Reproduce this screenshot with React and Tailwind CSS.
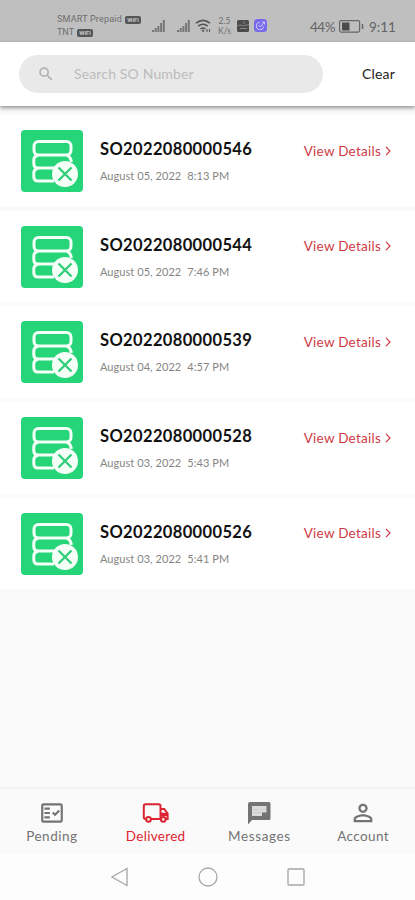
import { MdSearch, MdOutlineFactCheck, MdPersonOutline } from 'react-icons/md'

const ORDERS = [
  { number: 'SO2022080000546', date: 'August 05, 2022', time: '8:13 PM' },
  { number: 'SO2022080000544', date: 'August 05, 2022', time: '7:46 PM' },
  { number: 'SO2022080000539', date: 'August 04, 2022', time: '4:57 PM' },
  { number: 'SO2022080000528', date: 'August 03, 2022', time: '5:43 PM' },
  { number: 'SO2022080000526', date: 'August 03, 2022', time: '5:41 PM' },
]

const TABS = [
  { key: 'pending', label: 'Pending', icon: PendingIcon, spacing: 'tracking-[0.5px]' },
  { key: 'delivered', label: 'Delivered', icon: TruckIcon, spacing: 'tracking-[0.3px]' },
  { key: 'messages', label: 'Messages', icon: MessageIcon, spacing: 'tracking-[0.6px]' },
  { key: 'account', label: 'Account', icon: AccountIcon, spacing: 'tracking-[0.4px]' },
]

function PendingIcon() {
  return <MdOutlineFactCheck size={26} />
}

function AccountIcon() {
  return <MdPersonOutline size={28} />
}

function TruckIcon() {
  return (
    <svg width="28" height="20" viewBox="0 0 28 20" fill="none" stroke="currentColor" strokeWidth="2">
      <path d="M4.5 16H3.6Q1.8 16 1.8 14V3Q1.8 1.2 3.6 1.2H16.7Q18.5 1.2 18.5 3V16M8.5 16H18.5" />
      <path d="M18.5 6H22.2L25.6 10.5V16H24" />
      <path d="M19 9.8H24.8L26 11V13H19Z" fill="currentColor" stroke="none" />
      <circle cx="6.5" cy="16.4" r="2.3" />
      <circle cx="21.3" cy="16.4" r="2.3" />
    </svg>
  )
}

function MessageIcon() {
  return (
    <svg width="24" height="24" viewBox="0 0 24 24">
      <path d="M1 3Q1 1 3 1H22Q23.5 1 23.5 3V17.5Q23.5 19 22 19H5L1 23.5Z" fill="currentColor" />
      <path d="M5 5H19.5V11.5H15V15H5Z" fill="#dadada" />
      <path d="M6 8.5H18.5M6 11.5H14" stroke="#cdcdcd" />
    </svg>
  )
}

function OrderIcon() {
  return (
    <svg className="shrink-0" width="62" height="62" viewBox="0 0 62 62" fill="none">
      <rect width="62" height="62" rx="4" fill="#27d579" />
      <g stroke="#f4fff8" strokeWidth="3">
        <rect x="13" y="11.5" width="37" height="13.5" rx="4.5" />
        <path d="M17 25Q12.8 26.5 12.8 30V33.5Q12.8 38 17 38H34M46 25Q50.2 27.5 50.2 32" />
        <path d="M17 38Q12.8 39.5 12.8 43V46.5Q12.8 51 17 51H33" />
      </g>
      <circle cx="44" cy="44" r="13" fill="#f7fff9" />
      <path d="M37.5 37.5L50.5 50.5M50.5 37.5L37.5 50.5" stroke="#32ce7b" strokeWidth="2.4" />
    </svg>
  )
}

function Signal() {
  return (
    <svg width="13" height="12" viewBox="0 0 13 12" fill="#777">
      <path d="M0 10H2V12H0ZM2.7 8H4.7V12H2.7ZM5.4 6H7.4V12H5.4ZM8.1 3H10.1V12H8.1ZM10.8 0H12.8V12H10.8Z" />
    </svg>
  )
}

function Wifi() {
  return (
    <svg className="mt-[6px]" width="16" height="14" viewBox="0 0 16 14" fill="none" stroke="#555" strokeWidth="1.6">
      <path d="M1 4.2Q8 -1.4 15 4.2M3.2 7.2Q8 3.3 12.8 7.2M5.5 10Q8 8 10.5 10" />
      <path d="M7 11.3H9L8 12.8ZM12 10V13M14.5 10V13" strokeWidth="1" />
    </svg>
  )
}

function VoWifi() {
  return (
    <span className="flex h-[8px] w-4 items-center justify-center rounded-[2px] bg-[#555] text-[6px] leading-none font-bold text-[#c4c4c4]">
      WiFi
    </span>
  )
}

function StatusBar() {
  return (
    <div className="flex h-[42px] shrink-0 items-start bg-[#bfbfbf] pt-[13px] pl-[57px] text-[#6e6e6e]">
      <div className="w-[95px] font-[Roboto] text-[9px] leading-[13px]">
        <div className="flex items-center gap-[3px] whitespace-nowrap">
          <span className="tracking-[0.2px]">SMART Prepaid</span>
          <VoWifi />
        </div>
        <div className="flex items-center gap-[3px]">
          <span>TNT</span>
          <VoWifi />
        </div>
      </div>
      <div className="mt-[7px] flex w-[43px] gap-3">
        <Signal />
        <Signal />
      </div>
      <Wifi />
      <div className="ml-[4px] w-[19px] pt-[3px] text-center text-[8.5px] leading-[10px]">
        <div>2.5</div>
        <div>K/s</div>
      </div>
      <svg className="mt-[7px] ml-[3px]" width="12" height="12" viewBox="0 0 12 12">
        <rect width="12" height="12" rx="1.5" fill="#4c4c4c" />
        <path d="M0 5.5L4 5L5 6L12 4.5M3 8.5H10M7 1V4" stroke="#858585" fill="none" />
      </svg>
      <svg className="mt-[6px] ml-[5px]" width="13" height="13" viewBox="0 0 13 13" fill="none">
        <rect width="13" height="13" rx="3.5" fill="#7669ec" />
        <path d="M5.8 3.2A3.8 3.8 0 1 0 9.8 7.4M4.5 6L6.5 8L10 3.2M8 3H10.5V5.5" stroke="#d1cbf4" />
      </svg>
      <span className="ml-[43px] w-[29px] pt-[6px] font-[Lato] text-[13.5px] leading-4 tracking-[-0.5px] text-[#646464]">44%</span>
      <svg className="mt-[7px]" width="25" height="13" viewBox="0 0 25 13" fill="none">
        <rect x=".6" y=".6" width="20" height="11.5" rx="1.5" stroke="#666" strokeWidth="1.2" />
        <rect x="3" y="2.5" width="7.5" height="8" fill="#4c4c4c" />
        <path d="M23.5 4V9" stroke="#666" strokeWidth="1.5" />
      </svg>
      <span className="ml-[5px] pt-[6px] font-[Lato] text-[13.5px] leading-4 text-[#646464]">9:11</span>
    </div>
  )
}

function OrderRow({ order }) {
  return (
    <li className="flex h-[91.7px] items-start bg-white pt-[15px] pr-[24px] pl-[21px]">
      <OrderIcon />
      <div className="ml-[17px] pt-[9px]">
        <div className="text-[16.5px] leading-5 font-bold tracking-[0.36px] whitespace-nowrap text-[#111]">{order.number}</div>
        <div className="mt-[9px] text-[11px] leading-4 tracking-[0.06px] whitespace-nowrap text-[#858585]">
          {order.date}
          <span className="ml-[6px]">{order.time}</span>
        </div>
      </div>
      <button className="ml-auto flex items-center gap-[4px] pt-[10.5px] text-[13.5px] leading-5 tracking-[0.25px] whitespace-nowrap text-[#cf3a45]">
        View Details
        <svg width="6" height="10" viewBox="0 0 6 10" fill="none" stroke="currentColor" strokeWidth="1.2">
          <path d="M1 .8L5 5L1 9.2" />
        </svg>
      </button>
    </li>
  )
}

export default function App() {
  const active = 'delivered'

  return (
    <div className="flex h-[900px] w-full flex-col overflow-hidden bg-[#fafafa] font-[Lato,sans-serif]">
      <StatusBar />

      {/* Search */}
      <header className="z-10 flex h-16 shrink-0 items-center bg-white pr-5 pl-[19px] shadow-[0_2px_4px_rgba(0,0,0,0.42)]">
        <div className="flex h-[38px] w-[304px] items-center rounded-full bg-[#e9e9e9] pl-[18px]">
          <MdSearch size={18} className="text-[#adadad]" />
          <span className="ml-[19px] pb-[2px] text-[14px] tracking-[0.15px] text-[#bcbcbc]">Search SO Number</span>
        </div>
        <span className="ml-auto pb-px text-[14px] tracking-[0.2px] text-[#222]">Clear</span>
      </header>

      {/* Delivered orders */}
      <main className="flex-1 bg-[#fafafa] pt-[9px]">
        <ul className="flex flex-col gap-1">
          {ORDERS.map(order => <OrderRow key={order.number} order={order} />)}
        </ul>
      </main>

      <nav className="grid h-[67px] shrink-0 grid-cols-4 border-t-2 border-[#f3f3f3] bg-[#fafafa]">
        {TABS.map(({ key, label, icon: Icon, spacing }) => (
          <button
            key={key}
            className={`flex flex-col items-center pt-[11px] ${key === active ? 'text-[#dc2430]' : 'text-[#737373]'}`}
          >
            <span className="flex h-[26px] items-center"><Icon /></span>
            <span className={`text-[13.5px] leading-5 ${spacing}`}>{label}</span>
          </button>
        ))}
      </nav>

      {/* Android buttons */}
      <div className="flex h-[46px] shrink-0 items-center justify-center gap-[69px] bg-[#fdfdfd] text-[#a5a5a5]">
        <svg width="18" height="20" viewBox="0 0 18 20" fill="none" stroke="currentColor" strokeWidth="1.3">
          <path d="M16 1.5V18.5L.8 10Z" />
        </svg>
        <svg width="20" height="20" viewBox="0 0 20 20" fill="none" stroke="currentColor" strokeWidth="1.3">
          <circle cx="10" cy="10" r="9" />
        </svg>
        <svg width="18" height="18" viewBox="0 0 18 18" fill="none" stroke="currentColor" strokeWidth="1.3">
          <rect x="1" y="1" width="16" height="16" rx="1" />
        </svg>
      </div>
    </div>
  )
}
